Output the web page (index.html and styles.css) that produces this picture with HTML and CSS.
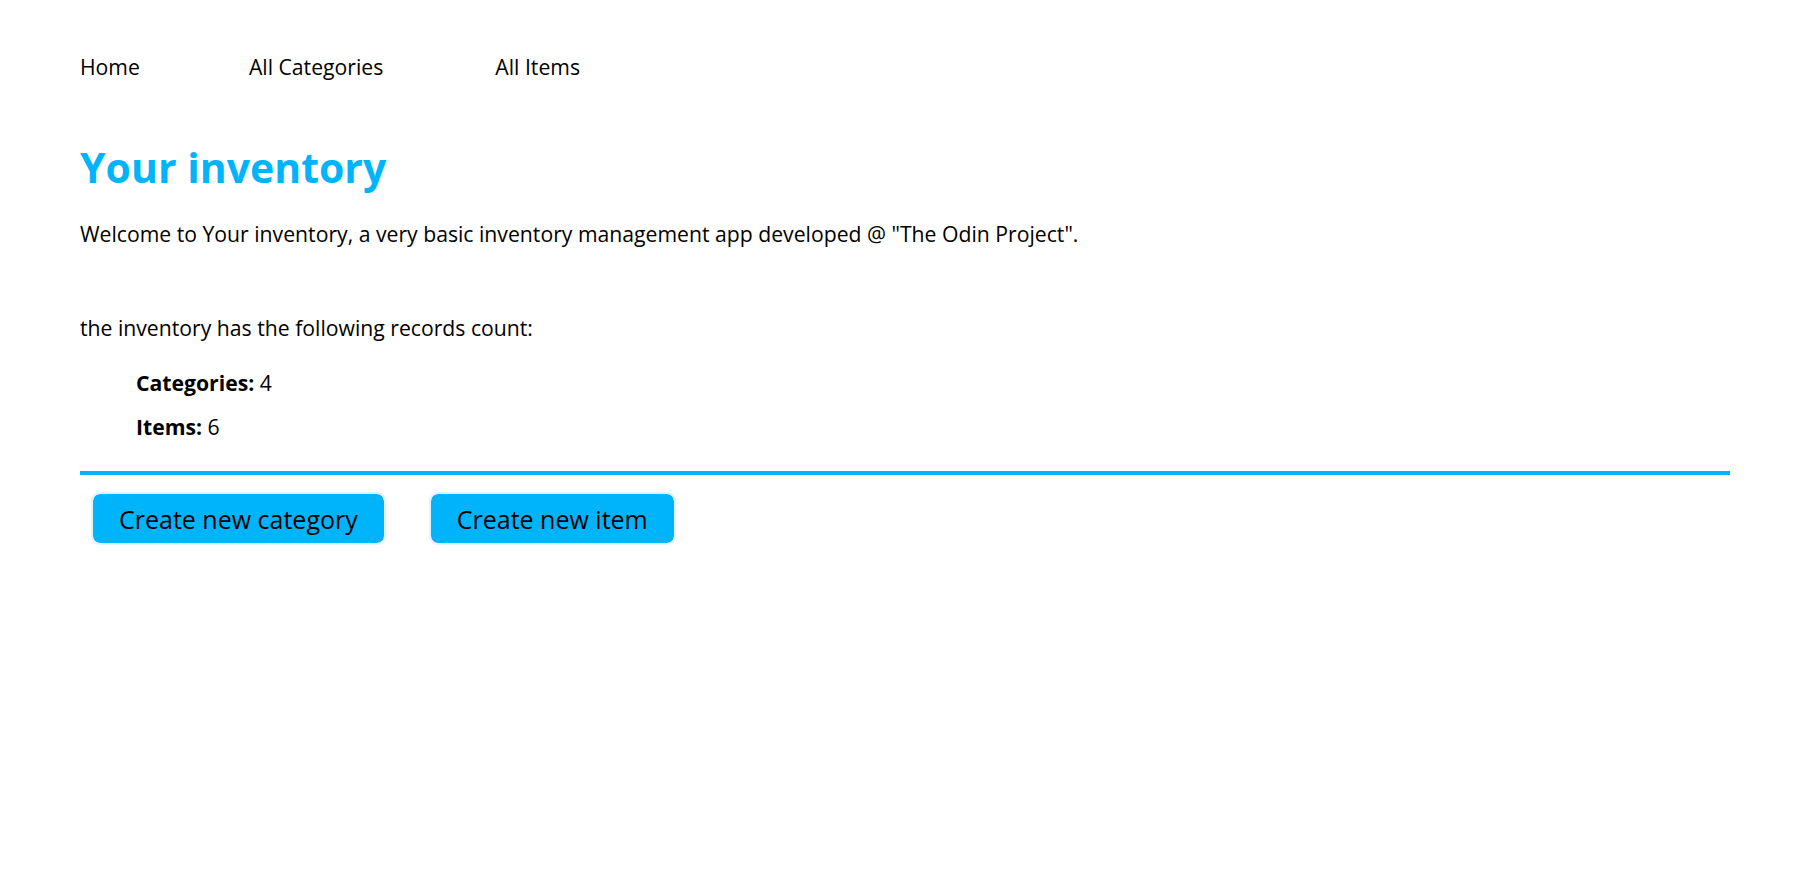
FILE: index.html
```html
<!DOCTYPE html>
<html lang="en">
<head>
<meta charset="utf-8">
<title>Your inventory</title>
<link rel="stylesheet" href="styles.css">
</head>
<body>
<div class="page">
  <nav class="nav">
    <a href="#">Home</a>
    <a href="#">All Categories</a>
    <a href="#">All Items</a>
  </nav>
  <main class="main">
    <h1 class="title">Your inventory</h1>
    <p class="intro">Welcome to Your inventory, a very basic inventory management app developed @ "The Odin Project".</p>
    <p class="count-intro">the inventory has the following records count:</p>
    <ul class="counts">
      <li><strong>Categories:</strong> 4</li>
      <li><strong>Items:</strong> 6</li>
    </ul>
    <hr class="rule">
    <div class="actions">
      <button class="btn">Create new category</button>
      <button class="btn">Create new item</button>
    </div>
  </main>
</div>
</body>
</html>
```

FILE: styles.css
```css
html, body {
  margin: 0;
  padding: 0;
  background: #ffffff;
}
body {
  font-family: "Open Sans", "Noto Sans", sans-serif;
  color: #000;
  font-size: 21.2px;
}
.page {
  padding: 0 77px 0 80px;
}
.nav {
  display: flex;
  gap: 109px;
  padding-top: 54px;
  height: 26px;
  line-height: 26px;
}
.nav a {
  color: #000;
  text-decoration: none;
}
.nav a:last-child {
  margin-left: 3px;
}
.title {
  margin: 0;
  margin-top: 62px;
  font-size: 41px;
  line-height: 50px;
  color: #00b4fc;
  font-weight: 700;
}
.intro {
  margin: 30px 0 0;
  line-height: 24px;
}
.count-intro {
  margin: 70px 0 0;
  line-height: 24px;
}
.counts {
  list-style: none;
  margin: 31px 0 0;
  padding-left: 56px;
}
.counts li {
  line-height: 24px;
  margin-bottom: 20px;
}
.rule {
  margin: 32px 0 0;
  border: none;
  height: 4px;
  background: #00b4fc;
}
.actions {
  display: flex;
  gap: 43px;
  padding: 17px 11px;
}
.btn {
  font-family: inherit;
  font-size: 25px;
  height: 53px;
  padding: 0 26px;
  background: #00b4fc;
  background-clip: padding-box;
  color: #000;
  border: 2px solid #dff3fc;
  border-radius: 9px;
}
```
